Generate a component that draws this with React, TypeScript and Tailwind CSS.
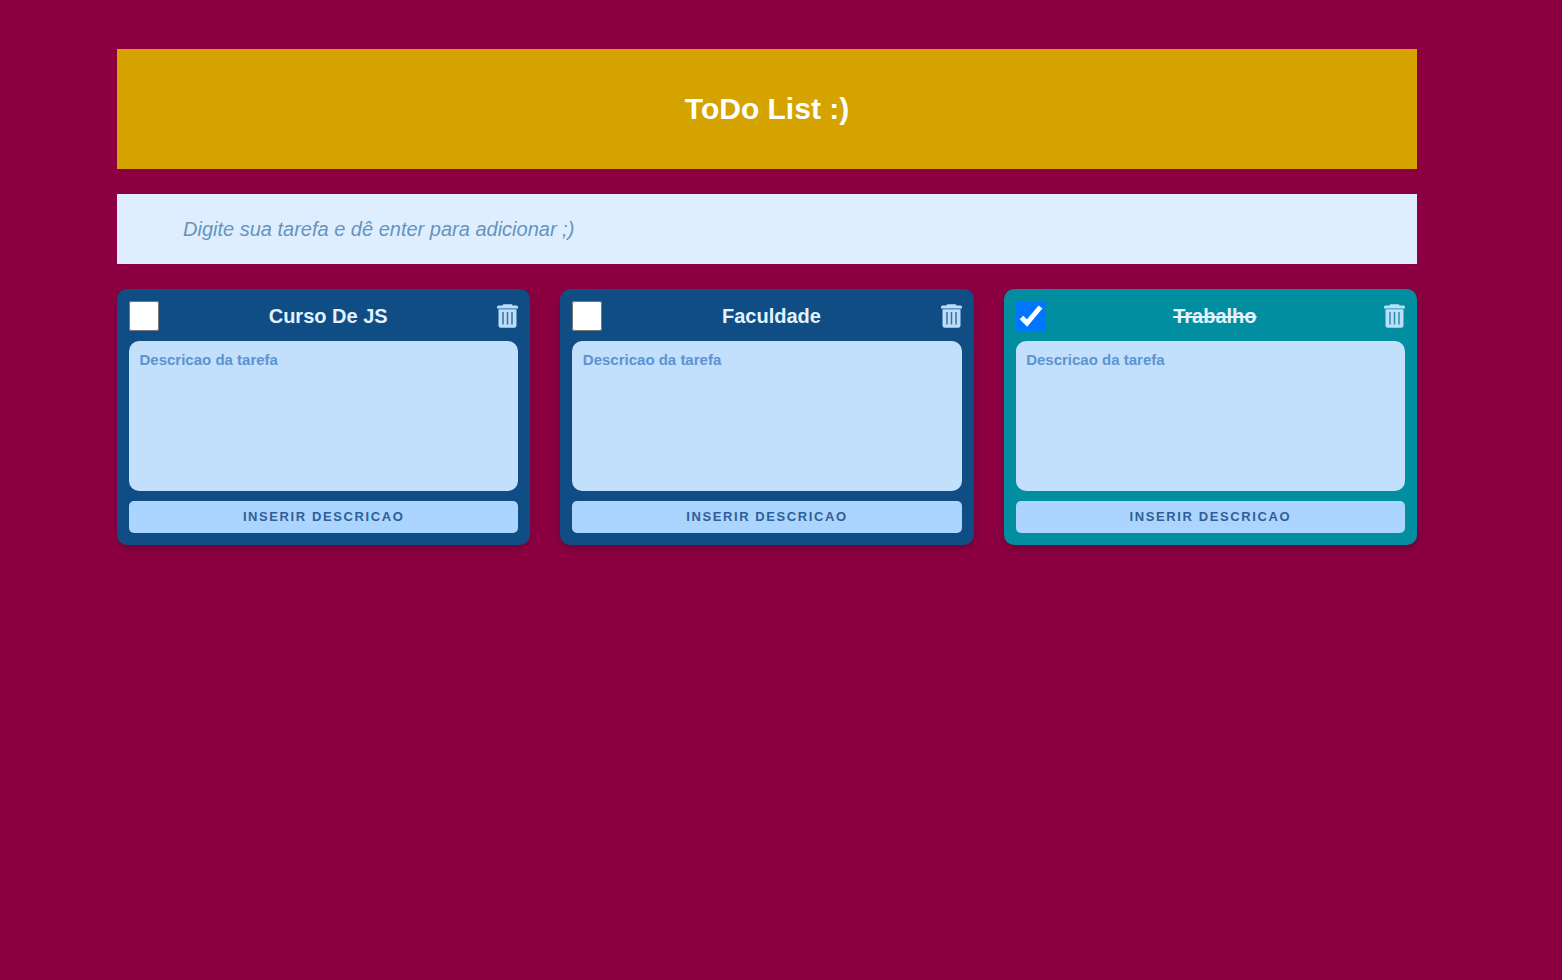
const tasks = [
  { id: 1, title: "Curso De JS", done: false },
  { id: 2, title: "Faculdade", done: false },
  { id: 3, title: "Trabalho", done: true },
];

function TrashIcon({ slot }: { slot: string }) {
  return (
    <svg viewBox="0 0 21 24" className="h-[24px] w-[21px] text-[#bbdefb]" fill="currentColor">
      <path d="M5.5 1.4 Q5.5 0.2 7 0.2 H14 Q15.5 0.2 15.5 1.4 H19.5 Q21 1.4 21 3 V4.6 H0 V3 Q0 1.4 1.5 1.4 Z" />
      <path d="M1.5 5.2 H19.5 V21.6 Q19.5 23.8 17.3 23.8 H3.7 Q1.5 23.8 1.5 21.6 Z" />
      <path d="M6 8 V20.5 M10.5 8 V20.5 M15 8 V20.5" stroke={slot} strokeWidth="1.5" />
    </svg>
  );
}

function TaskCard({ title, done }: { title: string; done: boolean }) {
  return (
    <div
      className={`flex flex-col gap-[10px] rounded-[10px] p-3 shadow-[0_4px_8px_rgba(0,0,0,0.2)] ${
        done ? "bg-[#018ea0]" : "bg-[#0f4d84]"
      }`}
    >
      <div className="flex items-center justify-between">
        {done ? (
          <div className="relative h-[30px] w-[30px]">
            <input
              type="checkbox"
              defaultChecked
              className="h-[30px] w-[30px] appearance-none bg-[#0075ff]"
            />
            <svg viewBox="0 0 30 30" className="absolute inset-0 h-[30px] w-[30px]" fill="none">
              <path d="M5.5 16.5 L11 22 L24.5 6" stroke="white" strokeWidth="5" />
            </svg>
          </div>
        ) : (
          <input type="checkbox" className="h-[30px] w-[30px]" />
        )}
        <h2
          className={`text-[20px] font-bold text-[#e3f2fd] ${done ? "line-through" : ""}`}
        >
          {title}
        </h2>
        <TrashIcon slot={done ? "#2f8fa8" : "#3f6f9c"} />
      </div>
      <textarea
        placeholder="Descricao da tarefa"
        className="h-[150px] w-full resize-none rounded-[10px] bg-[#c2dffc] px-[10.5px] py-[8px] text-[15px] font-bold outline-none placeholder:text-[#5b94d2]"
      />
      <button className="h-[32px] w-full rounded-[5px] bg-[#abd5ff] text-[13px] font-bold tracking-[1.6px] text-[#2f5f96] uppercase">
        Inserir descricao
      </button>
    </div>
  );
}

export default function App() {
  return (
    <div className="min-h-[980px] bg-[#8c0042] pt-[49px] pr-[28px] font-['Liberation_Sans',Arial,sans-serif]">
      <div className="mx-auto flex w-[1300px] flex-col gap-[25px]">
        <header className="flex h-[120px] items-center justify-center bg-[#d4a300] pb-[2px]">
          <h1 className="text-[30px] font-bold text-white">ToDo List :)</h1>
        </header>
        <input
          placeholder="Digite sua tarefa e dê enter para adicionar ;)"
          className="h-[70px] w-full bg-[#deeeff] pl-[66px] text-[20px] italic outline-none placeholder:text-[#6594bd]"
        />
        <div className="grid grid-cols-3 gap-[30px]">
          {tasks.map((task) => (
            <TaskCard key={task.id} title={task.title} done={task.done} />
          ))}
        </div>
      </div>
    </div>
  );
}
